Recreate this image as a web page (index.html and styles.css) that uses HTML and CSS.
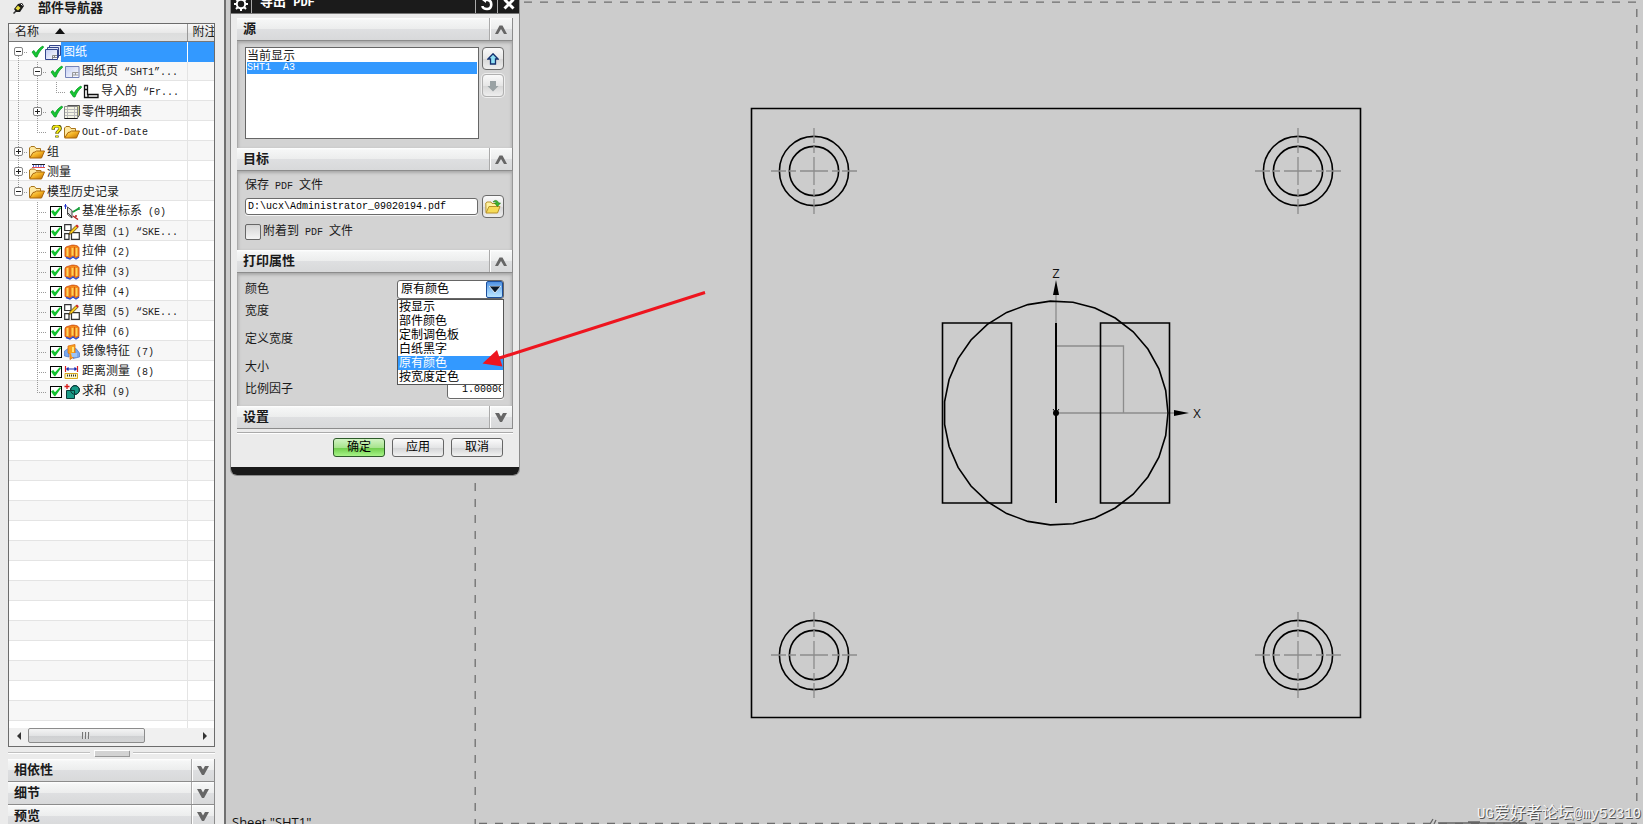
FILE: index.html
```html
<!DOCTYPE html>
<html lang="zh-CN">
<head>
<meta charset="utf-8">
<title>导出 PDF</title>
<link rel="stylesheet" href="styles.css">
</head>
<body>
<svg class="defs" aria-hidden="true">
  <defs>
    <linearGradient id="gold" x1="0" y1="0" x2="1" y2="1"><stop offset="0" stop-color="#ffe680"/><stop offset=".5" stop-color="#f3b021"/><stop offset="1" stop-color="#b86a04"/></linearGradient>
    <linearGradient id="sheet" x1="0" y1="0" x2="1" y2="1"><stop offset="0" stop-color="#c3cdf2"/><stop offset="1" stop-color="#ffffff"/></linearGradient>
    <symbol id="i-tick" viewBox="0 0 13 13"><path d="M1 7 3 5.500 5 8.500C6.500 5 9 2.500 12 1L12.500 2.500C9.500 5 7.500 8 6 12H4.500Z" fill="#14c832" stroke="#0b9a26" stroke-width=".8"/></symbol>
    <symbol id="i-question" viewBox="0 0 13 14"><path d="M3 5V3.500C3 0 10.500 0 10.500 3.800 10.500 6.300 7 6.300 7 9.500M7 11.200V13.500" fill="none" stroke="#55500a" stroke-width="3.600"/><path d="M3 4.600V3.500C3 .4 10.300 .4 10.300 3.800 10.300 6.300 7 6.300 7 9.200M7 11.600V13.200" fill="none" stroke="#f4ea12" stroke-width="2"/></symbol>
    <symbol id="i-sheets" viewBox="0 0 16 16"><path d="M4.500 1.500H15.500V11.500H4.500Z" fill="#dfe4f6" stroke="#34468c"/><path d="M2.500 3.500H13.500V13.500H2.500Z" fill="#dfe4f6" stroke="#34468c"/><path d="M.5 5.500H12.500V15.500H.5Z" fill="url(#sheet)" stroke="#34468c"/><path d="M7.500 15V11.500H12M7.500 13.500H12M9.500 11.500V13.500" fill="none" stroke="#888"/></symbol>
    <symbol id="i-sheet" viewBox="0 0 16 16"><path d="M1.500 2.500H15V13.500H1.500Z" fill="url(#sheet)" stroke="#7482b8"/><path d="M8.500 13V8.500H14.500M8.500 11H14.500M11.500 8.500V11" fill="none" stroke="#999"/></symbol>
    <symbol id="i-import" viewBox="0 0 16 16"><path d="M1.500 1.500H4.500V10.500H15V13.500H1.500ZM2 5.500H4M5 13V11" fill="#fff" stroke="#111" stroke-width="1.300"/></symbol>
    <symbol id="i-parts" viewBox="0 0 16 16"><path d="M3.500 1.500H15.500V11L13 14.500" fill="#c9c98a" stroke="#555"/><path d="M.5 2.500H13.500V14.500H.5Z" fill="#f4f4e4" stroke="#888"/><path d="M1 5.500H13M1 8.500H13M1 11.500H13M3.500 3V14M10.500 3V14" stroke="#bbb" fill="none"/><path d="M.5 14.500H13.500" stroke="#111"/></symbol>
    <symbol id="i-folder" viewBox="0 0 16 16"><path d="M.5 13.500V4L2 2.500H5.500L7 4.500H11.500V7" fill="#ffe9a0" stroke="#a8741a"/><path d="M.7 14 4 8.500 6 8 7.500 7H15.500L12.500 14Z" fill="url(#gold)" stroke="#a8640a"/></symbol>
    <symbol id="i-measure-folder" viewBox="0 0 16 16"><path d="M.5 14.500V6L2 5H5.500L7 6.500H12V8" fill="#ffe9a0" stroke="#a8741a"/><path d="M.7 15 4 9.500 6 9 7.500 8H15.500L12.500 15Z" fill="url(#gold)" stroke="#a8640a"/><path d="M3 0H16V4H3Z" fill="#fff"/><path d="M3 .5H16" stroke="#222"/><path d="M4 2H15.500" stroke="#2233dd" stroke-width="1.500" stroke-dasharray="1 1.500"/><path d="M3 3.500H16" stroke="#d22" stroke-width=".8"/></symbol>
    <symbol id="i-csys" viewBox="0 0 16 16"><path d="M1.500 0V5M0 2H3" stroke="#2233cc"/><path d="M3.500 3 8 6.500V14L3.500 10.500ZM8 8 14 5.500M8 13 3 8" fill="#e4e4e4" stroke="#444"/><path d="M9 8 14.500 4.500M15 3V6" stroke="#16a03a" stroke-width="1.500"/><path d="M9 12 14 15.500M11 12H13" stroke="#b52525" stroke-width="1.500"/></symbol>
    <symbol id="i-sketch" viewBox="0 0 16 16"><path d="M.7 .7H7V6.500H.7ZM.7 9.700H5V15.300H.7ZM7.500 8.700H15.300V15.300H7.500Z" fill="#fff" stroke="#333" stroke-width="1.200"/><path d="M5 10.500 6.300 7.300 12 1.500 14 3.300 8 9.300Z" fill="#f8c81c" stroke="#5c3c08" stroke-width=".8"/><path d="M11.600 1.800 13 .5 14.800 2.300 13.600 3.700Z" fill="#d42222"/></symbol>
    <symbol id="i-extrude" viewBox="0 0 16 16"><path d="M1 5C1 2 5 2.500 6.500 1.500 9 .5 15 1.500 15 4V12.500L11.500 14 9 12 6 14 1 12.500Z" fill="#f58a1c" stroke="#c8420c" stroke-width=".8"/><path d="M3.500 4V12M8.500 4V11.500M12.500 4V12" stroke="#ffd45e" stroke-width="1.800"/><path d="M6 3V13M10.500 3V13" stroke="#c8500f" stroke-width=".8"/><path d="M2 13.500 6 15 9 13 12 15 15 13" fill="none" stroke="#2a4bd0" stroke-width="1.400"/></symbol>
    <symbol id="i-mirror" viewBox="0 0 16 16"><path d="M.5 7 5 4V13L.5 12ZM8 6 12 4.500 15.500 9V13L9 14.500Z" fill="#78a8ef" stroke="#4a74c4" stroke-width=".7"/><path d="M4 2 11 .5V12L6 15.500V10L4 9Z" fill="#f8a41e" stroke="#e06c10" stroke-width=".8"/><path d="M9 3V8" stroke="#ffe27a" stroke-width="2"/><path d="M7 9H13V13H8Z" fill="#9cc4f8"/></symbol>
    <symbol id="i-distance" viewBox="0 0 16 16"><path d="M1.500 2V8M13.500 2V8" stroke="#d22" stroke-width="1.200"/><path d="M2 5H13M4.500 3.500 3 5 4.500 6.500M10.500 3.500 12 5 10.500 6.500" fill="none" stroke="#1a2cb0" stroke-width="1.200"/><path d="M1 9.500H13.500V14.500H1Z" fill="#fff8c8" stroke="#d9a91c"/><path d="M3 11.500H12" stroke="#333" stroke-width="2" stroke-dasharray="1 1"/></symbol>
    <symbol id="i-unite" viewBox="0 0 16 16"><path d="M3 0V5M.5 2.500H5.500" stroke="#d81818" stroke-width="1.300"/><circle cx="11" cy="6" r="4.400" fill="#189a86" stroke="#0a3a38"/><path d="M2.500 6.500H10.500V14.500H2.500Z" fill="#189a86" stroke="#0a3a38"/><circle cx="11" cy="6" r="4.400" fill="none" stroke="#0a3a38"/></symbol>
    <symbol id="i-down" viewBox="0 0 12 9"><path d="M0 0H4L6 3.500 8 0H12L7 9H5Z" fill="#666"/></symbol>
    <symbol id="i-up" viewBox="0 0 12 9"><path d="M0 9 4.500 .5H7.500L12 9H9L6 4 3 9Z" fill="#666"/></symbol>
  </defs>
</svg>

<div class="app">
  <aside class="nav">
    <h1 class="nav-title">
      <svg width="12" height="12" viewBox="0 0 12 12"><path d="M1 7 5 2 9 1 11 4 7 10 3 10Z" fill="#1a1a1a"/><path d="M2.500 6.500 5 3.500 7.500 6 5 8.500Z" fill="#e8dc3c"/><path d="M8 2 9.500 3.500" stroke="#fff"/><path d="M3 9 .5 11.500" stroke="#333" stroke-width="1.500"/></svg>
      部件导航器
    </h1>
    <div class="tree">
      <div class="tree-body">
        <table>
          <colgroup><col class="col-name"><col></colgroup>
          <thead>
            <tr><th>名称<svg class="sort" width="10" height="6" viewBox="0 0 10 6"><path d="M5 0 10 6H0Z" fill="#111"/></svg></th><th>附注</th></tr>
          </thead>
          <tbody>
            <tr class="selected"><td><div class="row"><span class="slot first"><button class="exp" aria-label="折叠"></button></span><svg class="mark"><use href="#i-tick"/></svg><svg class="ico"><use href="#i-sheets"/></svg><span class="label">图纸</span></div></td><td></td></tr>
            <tr><td><div class="row"><span class="slot pipe"></span><span class="slot tee"><button class="exp" aria-label="折叠"></button></span><svg class="mark"><use href="#i-tick"/></svg><svg class="ico"><use href="#i-sheet"/></svg><span class="label">图纸页<span class="m"> “SHT1”...</span></span></div></td><td></td></tr>
            <tr><td><div class="row"><span class="slot pipe"></span><span class="slot pipe"></span><span class="slot end"></span><svg class="mark"><use href="#i-tick"/></svg><svg class="ico"><use href="#i-import"/></svg><span class="label">导入的<span class="m"> “Fr...</span></span></div></td><td></td></tr>
            <tr><td><div class="row"><span class="slot pipe"></span><span class="slot tee"><button class="exp plus" aria-label="展开"></button></span><svg class="mark"><use href="#i-tick"/></svg><svg class="ico"><use href="#i-parts"/></svg><span class="label">零件明细表</span></div></td><td></td></tr>
            <tr><td><div class="row"><span class="slot pipe"></span><span class="slot end"></span><svg class="mark"><use href="#i-question"/></svg><svg class="ico"><use href="#i-folder"/></svg><span class="label"><span class="m">Out-of-Date</span></span></div></td><td></td></tr>
            <tr><td><div class="row"><span class="slot tee"><button class="exp plus" aria-label="展开"></button></span><svg class="ico"><use href="#i-folder"/></svg><span class="label">组</span></div></td><td></td></tr>
            <tr><td><div class="row"><span class="slot tee"><button class="exp plus" aria-label="展开"></button></span><svg class="ico"><use href="#i-measure-folder"/></svg><span class="label">测量</span></div></td><td></td></tr>
            <tr><td><div class="row"><span class="slot end"><button class="exp" aria-label="折叠"></button></span><svg class="ico"><use href="#i-folder"/></svg><span class="label">模型历史记录</span></div></td><td></td></tr>
            <tr><td><div class="row"><span class="slot"></span><span class="slot tee"></span><input type="checkbox" class="feat" id="f0" checked><svg class="ico"><use href="#i-csys"/></svg><label class="label" for="f0">基准坐标系<span class="m"> (0)</span></label></div></td><td></td></tr>
            <tr><td><div class="row"><span class="slot"></span><span class="slot tee"></span><input type="checkbox" class="feat" id="f1" checked><svg class="ico"><use href="#i-sketch"/></svg><label class="label" for="f1">草图<span class="m"> (1) “SKE...</span></label></div></td><td></td></tr>
            <tr><td><div class="row"><span class="slot"></span><span class="slot tee"></span><input type="checkbox" class="feat" id="f2" checked><svg class="ico"><use href="#i-extrude"/></svg><label class="label" for="f2">拉伸<span class="m"> (2)</span></label></div></td><td></td></tr>
            <tr><td><div class="row"><span class="slot"></span><span class="slot tee"></span><input type="checkbox" class="feat" id="f3" checked><svg class="ico"><use href="#i-extrude"/></svg><label class="label" for="f3">拉伸<span class="m"> (3)</span></label></div></td><td></td></tr>
            <tr><td><div class="row"><span class="slot"></span><span class="slot tee"></span><input type="checkbox" class="feat" id="f4" checked><svg class="ico"><use href="#i-extrude"/></svg><label class="label" for="f4">拉伸<span class="m"> (4)</span></label></div></td><td></td></tr>
            <tr><td><div class="row"><span class="slot"></span><span class="slot tee"></span><input type="checkbox" class="feat" id="f5" checked><svg class="ico"><use href="#i-sketch"/></svg><label class="label" for="f5">草图<span class="m"> (5) “SKE...</span></label></div></td><td></td></tr>
            <tr><td><div class="row"><span class="slot"></span><span class="slot tee"></span><input type="checkbox" class="feat" id="f6" checked><svg class="ico"><use href="#i-extrude"/></svg><label class="label" for="f6">拉伸<span class="m"> (6)</span></label></div></td><td></td></tr>
            <tr><td><div class="row"><span class="slot"></span><span class="slot tee"></span><input type="checkbox" class="feat" id="f7" checked><svg class="ico"><use href="#i-mirror"/></svg><label class="label" for="f7">镜像特征<span class="m"> (7)</span></label></div></td><td></td></tr>
            <tr><td><div class="row"><span class="slot"></span><span class="slot tee"></span><input type="checkbox" class="feat" id="f8" checked><svg class="ico"><use href="#i-distance"/></svg><label class="label" for="f8">距离测量<span class="m"> (8)</span></label></div></td><td></td></tr>
            <tr><td><div class="row"><span class="slot"></span><span class="slot end"></span><input type="checkbox" class="feat" id="f9" checked><svg class="ico"><use href="#i-unite"/></svg><label class="label" for="f9">求和<span class="m"> (9)</span></label></div></td><td></td></tr>
          </tbody>
        </table>
      </div>
      <div class="hscroll">
        <button class="arrow" aria-label="向左滚动"><svg width="4" height="8" viewBox="0 0 4 8"><path d="M4 0V8L0 4Z" fill="#333"/></svg></button>
        <div class="track"><div class="thumb"><i></i><i></i><i></i></div></div>
        <button class="arrow" aria-label="向右滚动"><svg width="4" height="8" viewBox="0 0 4 8"><path d="M0 0V8L4 4Z" fill="#333"/></svg></button>
      </div>
    </div>
    <div class="splitter"><span></span><b></b><span></span></div>
    <div class="panels">
      <button class="bar"><span>相依性</span><i><svg width="12" height="9"><use href="#i-down"/></svg></i></button>
      <button class="bar"><span>细节</span><i><svg width="12" height="9"><use href="#i-down"/></svg></i></button>
      <button class="bar"><span>预览</span><i><svg width="12" height="9"><use href="#i-down"/></svg></i></button>
    </div>
  </aside>

  <main class="canvas">
    <svg class="drawing" viewBox="226 0 1417 824" preserveAspectRatio="xMinYMin meet">
      <defs>
        <g id="hole">
          <circle r="34.600" class="edge"/><circle r="24.600" class="edge"/>
          <path class="centre" d="M-43 0H-28M-25 0H-18M-14 0H14M18 0H25M28 0H43M0-43V-28M0-25V-18M0-14V14M0 18V25M0 28V43"/>
        </g>
      </defs>
      <g class="frame">
        <path d="M476 2.200H1637"/>
        <path d="M1636.800 9V824"/>
        <path d="M475.200 3V824"/>
        <path d="M479 823.500H1637"/>
      </g>
      <path class="edge" d="M751.500 108.500H1360.500V717.500H751.500Z"/>
      <use href="#hole" x="814" y="171"/>
      <use href="#hole" x="1298" y="171"/>
      <use href="#hole" x="814" y="655"/>
      <use href="#hole" x="1298" y="655"/>
      <g transform="translate(1056 413)">
        <path class="axis" d="M0-90V-120M0 0H120M0-67H67.500V0"/>
        <path class="edge" d="M-113.500-90H-44.500V90H-113.500ZM44.500-90H113.500V90H44.500Z"/>
        <path class="edge" d="M112 0 109.700 22.500 102.900 44.200 91.900 64 77.200 81.200 59.200 95 38.900 105 17 110.700-5.700 111.900-28.100 108.400-49.300 100.600-68.600 88.600-85 73-97.900 54.400-106.900 33.500-111.400 11.300-111.400-11.300-106.900-33.500-97.900-54.400-85-73-68.600-88.600-49.300-100.600-28.100-108.400-5.700-111.900 17-110.700 38.900-105 59.200-95 77.200-81.200 91.900-64 102.900-44.200 109.700-22.500Z"/>
        <path d="M0-90V90" stroke="#000" stroke-width="2"/>
        <path d="M0-133 3-118H-3ZM133 0 118 3V-3Z"/>
        <circle r="3"/>
        <path d="M-3-4 0 0 3-4" fill="none" stroke="#000"/>
        <text x="0" y="-135" text-anchor="middle">Z</text>
        <text x="141" y="5" text-anchor="middle">X</text>
      </g>
      <text x="232" y="827">Sheet "SHT1"</text>
      <path d="M1430 824 1433 819M1434 824 1436 820M1438 823H1526M1468 822H1480M1512 823 1517 820M1516 824 1520 821" fill="none" stroke="#666" stroke-width="1.300"/>
    </svg>

    <section class="dialog" aria-label="导出 PDF">
      <header class="titlebar">
        <button class="tb" aria-label="选项"><svg width="14" height="14" viewBox="0 0 14 14"><circle cx="7" cy="7" r="4.200" fill="none" stroke="#fff" stroke-width="2"/><path d="M7 0V3M7 11V14M0 7H3M11 7H14M2 2 4 4M10 10 12 12M12 2 10 4M4 10 2 12" stroke="#fff" stroke-width="2"/></svg></button>
        <h2>导出<span class="m"> PDF</span></h2>
        <button class="tb" aria-label="重置"><svg width="12" height="14" viewBox="0 0 12 14"><path d="M3 3H7C11.500 4 11.500 12 6 12 3.500 12 1.500 11 1.500 9" fill="none" stroke="#fff" stroke-width="2.600"/><path d="M5 0V6L1 3Z" fill="#fff"/></svg></button>
        <button class="tb" aria-label="关闭"><svg width="12" height="12" viewBox="0 0 12 12"><path d="M1.500 1.500 10.500 10.500M10.500 1.500 1.500 10.500" stroke="#fff" stroke-width="3"/></svg></button>
      </header>
      <div class="sections">
        <button class="bar"><span>源</span><i><svg width="12" height="9"><use href="#i-up"/></svg></i></button>
        <div class="body body-source">
          <ul class="list" role="listbox" aria-label="源">
            <li role="option">当前显示</li>
            <li role="option" aria-selected="true" class="m">SHT1  A3</li>
          </ul>
          <div class="side">
            <button class="sq" aria-label="上移"><svg width="12" height="12" viewBox="0 0 12 12"><path d="M6 .8 11 6H8.500V11H3.500V6H1Z" fill="#8fe0f4" stroke="#14306e" stroke-width="1.300"/></svg></button>
            <button class="sq off" aria-label="下移" disabled><svg width="12" height="12" viewBox="0 0 12 12"><path d="M6 11.500 11.500 6H9V1H3V6H.5Z" fill="#9aa2a4"/></svg></button>
          </div>
        </div>
        <button class="bar"><span>目标</span><i><svg width="12" height="9"><use href="#i-up"/></svg></i></button>
        <div class="body body-target">
          <label for="path">保存<span class="m"> PDF </span>文件</label>
          <div class="file">
            <input class="field" id="path" type="text" value="D:\ucx\Administrator_09020194.pdf">
            <button class="sq" aria-label="浏览"><svg width="16" height="16" viewBox="0 0 16 16"><path d="M1 13.500 .8 4 2 3H6L7 4.500H12V7" fill="#fff2a0" stroke="#b8922c"/><path d="M1 14 4 7.500H15L12.500 14Z" fill="#f6dc58" stroke="#b8922c"/><path d="M8 3C9.500 .5 13 1 13.500 4H15.500L12.500 7.500 9.500 4H11.500C11 2.500 9.500 2.500 8 3Z" fill="#3fb52c" stroke="#1f7a18" stroke-width=".6"/></svg></button>
          </div>
          <div class="attach"><input type="checkbox" id="attach"><label for="attach">附着到<span class="m"> PDF </span>文件</label></div>
        </div>
        <button class="bar"><span>打印属性</span><i><svg width="12" height="9"><use href="#i-up"/></svg></i></button>
        <div class="body body-print">
          <div class="prop">
            <label for="colour">颜色</label>
            <div class="combo">
              <select id="colour"><option>原有颜色</option></select>
              <span class="drop"><svg width="12" height="7" viewBox="0 0 12 7"><path d="M0 0H12L6 7Z" fill="#0a1a2a" stroke="#fff" stroke-width=".8"/></svg></span>
              <ul class="popup" role="listbox" aria-label="颜色">
                <li role="option">按显示</li>
                <li role="option">部件颜色</li>
                <li role="option">定制调色板</li>
                <li role="option">白纸黑字</li>
                <li role="option" aria-selected="true">原有颜色</li>
                <li role="option">按宽度定色</li>
              </ul>
            </div>
          </div>
          <div class="prop"><span>宽度</span></div>
          <div class="prop apart"><span>定义宽度</span></div>
          <div class="prop apart"><span>大小</span></div>
          <div class="prop"><label for="scale">比例因子</label><input class="field scale" id="scale" type="text" value="1.00000"></div>
        </div>
        <button class="bar"><span>设置</span><i><svg width="12" height="9"><use href="#i-down"/></svg></i></button>
      </div>
      <footer class="actions">
        <button class="ok">确定</button><button>应用</button><button>取消</button>
      </footer>
      <div class="foot"></div>
    </section>

    <svg class="pointer" viewBox="226 0 1417 824" preserveAspectRatio="xMinYMin meet">
      <path d="M705 292.500 498 358.500" stroke="#ee151f" stroke-width="3"/>
      <path d="M482.500 363.500 497 350 502.500 366.500Z" fill="#ee151f"/>
    </svg>
    <p class="watermark"><span class="wm">UG</span>爱好者论坛<span class="wm">@my52310</span></p>
  </main>
</div>
</body>
</html>
```

FILE: styles.css
```css
* { box-sizing: border-box; }

body {
  margin: 0;
  overflow: hidden;
  background: #ebebeb;
  color: #1a1a1a;
  font: 12px/14px "Liberation Sans", "Noto Sans CJK SC", sans-serif;
}

h1, h2, p, ul { margin: 0; padding: 0; }
ul { list-style: none; }
button, input, select { font: inherit; color: inherit; margin: 0; }
button { padding: 0; border: 0; background: none; }
svg { display: block; flex: none; }
.defs { position: absolute; width: 0; height: 0; }
.m { font-family: "Liberation Mono", monospace; font-size: 10px; white-space: pre; }

.app { display: flex; height: 100vh; overflow: hidden; }

/* Part navigator */
.nav {
  display: flex;
  flex-direction: column;
  flex: none;
  width: 226px;
  height: calc(100vh + 4px);
  padding: 0 9px 0 8px;
  border-right: 2px solid #707070;
  background: #ebebeb;
}
.nav-title {
  display: flex;
  align-items: center;
  gap: 13px;
  height: 23px;
  padding: 0 0 7px 5px;
  font-size: 13px;
  line-height: 16px;
}
.tree {
  display: flex;
  flex-direction: column;
  flex: 1;
  min-height: 0;
  border: 1px solid #6c6c6c;
  background: #fff;
}
.tree-body {
  flex: 1;
  min-height: 0;
  overflow: hidden;
  background:
    linear-gradient(#e4e4e4, #e4e4e4) 178px 0 / 1px 100% no-repeat,
    repeating-linear-gradient(#fff 0 19px, #e4e4e4 19px 20px, #f7f7f7 20px 39px, #e4e4e4 39px 40px) 0 17px;
}
.tree table { width: 100%; table-layout: fixed; border-collapse: collapse; }
.col-name { width: 178px; }
.tree th {
  height: 17px;
  padding: 0 0 0 6px;
  border-bottom: 1px solid #777;
  background: linear-gradient(#f8f8f8, #e9e9e9 50%, #dcdddd 51%, #e0e0e0);
  font-weight: normal;
  text-align: left;
  white-space: nowrap;
  overflow: hidden;
}
.tree th + th { border-left: 1px solid #999; padding-left: 5px; }
.sort { display: inline-block; margin-left: 16px; vertical-align: 2px; }
.tree td { height: 20px; padding: 0; }
.row { display: flex; align-items: center; height: 20px; }
.selected td + td { background: #3399ff; }
.selected .label { background: #3399ff; color: #fff; }
.selected td + td { border-left: 1px solid #fff; }

.slot {
  --v: repeating-linear-gradient(#999 0 1px, transparent 1px 2px);
  --h: repeating-linear-gradient(90deg, #999 0 1px, transparent 1px 2px);
  display: flex;
  align-items: center;
  justify-content: center;
  flex: none;
  width: 19px;
  height: 20px;
}
.pipe { background: var(--v) 9px 0 / 1px 100% no-repeat; }
.tee { background: var(--v) 9px 0 / 1px 100% no-repeat, var(--h) 9px 10px / 10px 1px no-repeat; }
.end { background: var(--v) 9px 0 / 1px 10px no-repeat, var(--h) 9px 10px / 10px 1px no-repeat; }
.first { background: var(--v) 9px 10px / 1px 10px no-repeat, var(--h) 9px 10px / 10px 1px no-repeat; }
.exp {
  width: 9px;
  height: 9px;
  border: 1px solid #848484;
  border-radius: 2px;
  background: linear-gradient(#222, #222) center / 5px 1px no-repeat, #fff;
}
.exp.plus {
  background:
    linear-gradient(#222, #222) center / 5px 1px no-repeat,
    linear-gradient(#222, #222) center / 1px 5px no-repeat, #fff;
}
.mark { width: 13px; height: 13px; margin: 0 1px 0 3px; }
.slot + .ico { margin-left: 1px; }
.ico { width: 16px; height: 16px; }
.label { flex: 1; padding-left: 2px; line-height: 20px; white-space: nowrap; }
.feat {
  appearance: none;
  flex: none;
  width: 12px;
  height: 12px;
  margin: 0 2px 0 3px;
  border: 1px solid #000;
  background: #fff;
}
.feat:checked::after {
  content: "";
  display: block;
  width: 10px;
  height: 10px;
  background: #12c22e;
  clip-path: polygon(0 50%, 22% 35%, 40% 58%, 90% 5%, 100% 18%, 55% 80%, 40% 100%, 28% 90%);
}

.hscroll { display: flex; align-items: flex-start; height: 18px; background: #f0f0f0; }
.arrow { display: flex; justify-content: center; align-items: center; width: 19px; height: 16px; }
.track { flex: 1; }
.thumb {
  display: flex;
  justify-content: center;
  align-items: center;
  gap: 1px;
  width: 70%;
  height: 15px;
  border: 1px solid #8c8c8c;
  border-radius: 2px;
  background: linear-gradient(#f4f4f4, #e2e3e4 50%, #cfd0d2 51%, #d4d5d6);
}
.thumb i { width: 2px; height: 7px; background: #777; border-right: 1px solid #ddd; }

.splitter { display: flex; align-items: center; gap: 4px; height: 12px; }
.splitter span { flex: 1; height: 2px; background: #c0c0c0; border-bottom: 1px solid #fff; }
.splitter b { width: 35px; height: 6px; border: solid #fff; border-width: 1px 0 0 1px; box-shadow: 1px 1px 0 #999; background: #d3d3d3; }

/* Collapsible bar, used in both the navigator and the dialog */
.bar {
  display: flex;
  align-items: stretch;
  width: 100%;
  height: 23px;
  padding: 0 0 0 6px;
  border: solid #8c8c8c;
  border-width: 0 1px 1px 0;
  background: linear-gradient(#fff, #f5f6f6 10%, #eceded 50%, #dedfe1 51%, #d8d9da);
  font-size: 13px;
  font-weight: bold;
  line-height: 22px;
  text-align: left;
}
.bar span { flex: 1; }
.bar i {
  display: flex;
  align-items: center;
  justify-content: center;
  width: 23px;
  border-left: 1px solid #aaa;
  box-shadow: inset 1px 0 #fff;
}

/* Drawing area */
.canvas { position: relative; flex: 1; min-width: 0; overflow: hidden; background: #cccccc; }
.drawing, .pointer { position: absolute; top: 0; left: 0; width: 100%; height: 100%; }
.pointer { z-index: 2; pointer-events: none; }
.drawing text { font: 13px "Open Sans", "Noto Sans", sans-serif; fill: #111; }
.frame { fill: none; stroke: #6e6e6e; stroke-width: 1.3; stroke-dasharray: 8 8; }
.edge { fill: none; stroke: #000; stroke-width: 1.6; }
.centre, .axis { fill: none; stroke: #8c8c8c; stroke-width: 1.3; }
.watermark {
  position: absolute;
  right: 2px;
  bottom: 2px;
  color: #f4f4f4;
  font: 16px/20px "Noto Sans CJK SC", sans-serif;
  text-shadow: 1px 1px 0 #555;
}
.wm { font: 14px "Liberation Mono", monospace; }

/* Export dialog */
.dialog {
  position: absolute;
  top: -12px;
  left: 4px;
  width: 290px;
  border: 1px solid #8a8a8a;
  border-top: 0;
  border-radius: 0 0 7px 7px;
  background: #ebebeb;
  overflow: hidden;
}
.titlebar {
  display: flex;
  height: 26px;
  border-bottom: 1px solid #777;
  background: #1b1b1b;
  color: #fff;
}
.titlebar h2 { flex: 1; padding-left: 8px; border-left: 1px solid #aaa; font-size: 13px; line-height: 28px; }
.titlebar h2 .m { font-size: 12px; }
.tb { display: flex; align-items: center; justify-content: center; width: 20px; padding-top: 6px; }
.titlebar h2 ~ .tb { border-left: 1px solid #aaa; width: 22px; }
.sections { padding: 4px 6px 0 6px; }
.body {
  border-right: 1px solid #999;
  border-left: 1px solid #aaa;
  background: #d3d3d3;
  box-shadow: inset 0 3px 3px -1px #aaa, inset 2px 0 3px -1px #bbb, inset -2px 0 3px -1px #bbb;
}
.body-source { display: flex; gap: 3px; height: 107px; padding: 6px 8px 9px 7px; }
.list {
  flex: 1;
  padding: 2px 1px;
  border: 1px solid #666;
  background: #fff;
}
.list li { height: 12px; line-height: 12px; }
.list li.m { font-size: 10px; }
li[aria-selected="true"] { background: #3399ff; color: #fff; }
.side { display: flex; flex-direction: column; gap: 4px; }
.sq {
  display: flex;
  align-items: center;
  justify-content: center;
  flex: none;
  width: 22px;
  height: 23px;
  border: 1px solid #6a6a6a;
  border-radius: 4px;
  background: linear-gradient(#fafafa, #e6e6e6 50%, #d6d6d6 51%, #eeeeee);
}
.sq.off { border-color: #b0b0b0; box-shadow: 0 0 0 1px #eee; }
.body-target { height: 79px; padding: 4px 8px 0 7px; }
.body-target > label { display: block; height: 20px; line-height: 21px; }
.file { display: flex; align-items: center; gap: 4px; }
.field {
  flex: 1;
  min-width: 0;
  height: 17px;
  padding: 0 2px;
  border: 1px solid #6a6a6a;
  border-radius: 3px;
  background: #fff;
  box-shadow: 0 1px 0 #f4f4f4;
  color: #000;
  font: 10px "Liberation Mono", monospace;
}
.attach { display: flex; align-items: center; gap: 2px; height: 27px; }
.attach input {
  appearance: none;
  width: 16px;
  height: 16px;
  border: 1px solid #666;
  border-radius: 2px;
  background: linear-gradient(#d4d4d4, #f4f4f4);
}
.body-print { height: 133px; padding: 6px 8px 0 7px; }
.prop { display: flex; align-items: center; justify-content: space-between; height: 20px; margin-bottom: 2px; line-height: 16px; }
.prop.apart { margin-top: 8px; }
.combo { position: relative; width: 107px; height: 19px; }
.combo select {
  appearance: none;
  display: block;
  width: 100%;
  height: 19px;
  padding: 0 18px 0 3px;
  border: 1px solid #666;
  border-radius: 3px;
  background: #fff;
  color: #000;
}
.drop {
  position: absolute;
  top: 1px;
  right: 1px;
  display: flex;
  align-items: center;
  justify-content: center;
  width: 17px;
  height: 17px;
  border: 1px solid #1c4f9c;
  border-radius: 2px;
  background: linear-gradient(#4d8fe0, #8ec4f6 50%, #b8e4ff);
  pointer-events: none;
}
.popup {
  position: absolute;
  z-index: 1;
  top: 19px;
  left: 0;
  width: 100%;
  border: 1px solid #555;
  background: #fff;
  color: #000;
}
.popup li { height: 14px; padding-left: 1px; line-height: 14px; }
.scale { flex: none; width: 57px; height: 19px; padding-left: 14px; }
.actions {
  display: flex;
  justify-content: flex-end;
  gap: 7px;
  margin: 3px 6px 0;
  padding: 5px 10px 10px;
  border-top: 1px solid #aaa;
  box-shadow: inset 0 1px #fff;
}
.actions button {
  width: 52px;
  height: 19px;
  border: 1px solid #666;
  border-radius: 3px;
  background: linear-gradient(#fbfbfb, #e4e5e6 50%, #d2d3d5 51%, #f2f2f2);
  color: #000;
  line-height: 17px;
}
.actions .ok { border-color: #2e5a2a; background: linear-gradient(#d2f4c4, #a8e48e 50%, #6ccb48 51%, #a8f488); }
.foot { height: 8px; background: #191919; }
```
